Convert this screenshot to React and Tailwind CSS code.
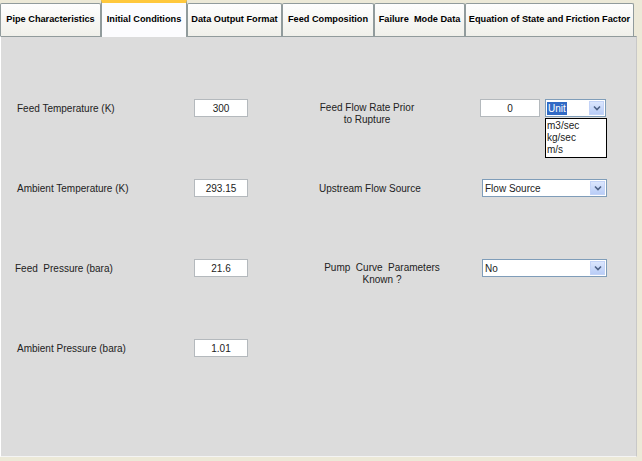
const tabs = [
  { label: 'Pipe Characteristics', w: 'w-[101px]' },
  { label: 'Initial Conditions', w: 'w-[86px]', active: true },
  { label: 'Data Output Format', w: 'w-[95px]' },
  { label: 'Feed Composition', w: 'w-[92px]' },
  { label: 'Failure  Mode Data', w: 'w-[91px]' },
  { label: 'Equation of State and Friction Factor', w: 'w-[169px]' },
]

function Arrow() {
  return (
    <div className="w-[15px] h-[14px] bg-gradient-to-b from-[#dbe6fd] to-[#b9cdf7] border border-[#c3d3f7] flex items-center justify-center">
      <svg width="8" height="6" viewBox="0 0 8 6">
        <path d="M1 1.5 L4 4.5 L7 1.5" stroke="#4d6185" strokeWidth="1.6" fill="none" />
      </svg>
    </div>
  )
}

function Select({ value, w, highlight }) {
  return (
    <div className={`${w} h-[18px] bg-white border border-[#7f9db9] flex items-center justify-between pl-[1px] pr-[1px]`}>
      {highlight ? (
        <span className="bg-[#316ac5] text-white px-[1px] leading-[13px]">{value}</span>
      ) : (
        <span className="pl-[1px]">{value}</span>
      )}
      <Arrow />
    </div>
  )
}

function Field({ value, w = 'w-[54px]' }) {
  return (
    <div className={`${w} h-[18px] shrink-0 bg-white border border-[#b4b9bd] flex items-center justify-center`}>
      {value}
    </div>
  )
}

export default function App() {
  return (
    <div className="w-[642px] h-[461px] bg-[#ece9d8] flex flex-col text-[10px] text-[#222] font-['Liberation_Sans',Arial,sans-serif] overflow-hidden">
      {/* tab strip */}
      <div className="h-[36px] flex items-end">
        {tabs.map((t) =>
          t.active ? (
            <div
              key={t.label}
              className={`${t.w} shrink-0 h-[37px] -mb-[1px] z-10 bg-[#fcfcfe] border-t-[3px] border-t-[#ffc83c] border-x border-x-[#919b9c] flex items-center justify-center font-bold text-[9.2px] text-black whitespace-pre`}
            >
              {t.label}
            </div>
          ) : (
            <div
              key={t.label}
              className={`${t.w} shrink-0 h-[33px] bg-gradient-to-b from-[#fefefe] to-[#f0f0ea] border border-[#919b9c] border-b-0 rounded-t-[2px] flex items-center justify-center font-bold text-[9.2px] text-black whitespace-pre`}
            >
              {t.label}
            </div>
          )
        )}
      </div>

      {/* panel */}
      <div className="w-[637px] h-[421px] bg-[#dcdcdc] border-l border-l-white border-t border-t-[#919b9c] border-r border-r-[#c8c8c8] border-b border-b-[#f4f4f4] pt-[31px]">
        <div className="h-[80px] flex items-center">
          <div className="w-[193px] shrink-0 pl-[16px]">Feed Temperature (K)</div>
          <Field value="300" />
          <div className="w-[100px] shrink-0 ml-[69px] mt-[12px] text-center leading-[12px] whitespace-nowrap">
            Feed Flow Rate Prior
            <br />
            to Rupture
          </div>
          <div className="ml-[63px] flex gap-[5px]">
            <Field value="0" w="w-[60px]" />
            <div className="relative">
              <Select value="Unit" w="w-[61px]" highlight />
              <div className="absolute left-0 top-[19px] w-[62px] bg-white border border-black flex flex-col leading-[12px] pl-[1px] py-[1px]">
                <span>m3/sec</span>
                <span>kg/sec</span>
                <span>m/s</span>
              </div>
            </div>
          </div>
        </div>

        <div className="h-[80px] flex items-center">
          <div className="w-[193px] shrink-0 pl-[16px]">Ambient Temperature (K)</div>
          <Field value="293.15" />
          <div className="w-[163px] shrink-0 ml-[71px]">Upstream Flow Source</div>
          <Select value="Flow Source" w="w-[125px]" />
        </div>

        <div className="h-[80px] flex items-center">
          <div className="w-[193px] shrink-0 pl-[14px] whitespace-pre">Feed  Pressure (bara)</div>
          <Field value="21.6" />
          <div className="w-[124px] shrink-0 ml-[72px] mt-[12px] text-center leading-[12px] whitespace-pre">
            {'Pump  Curve  Parameters'}
            <br />
            Known ?
          </div>
          <div className="ml-[38px]">
            <Select value="No" w="w-[125px]" />
          </div>
        </div>

        <div className="h-[80px] flex items-center">
          <div className="w-[193px] shrink-0 pl-[16px]">Ambient Pressure (bara)</div>
          <Field value="1.01" />
        </div>
      </div>
    </div>
  )
}
